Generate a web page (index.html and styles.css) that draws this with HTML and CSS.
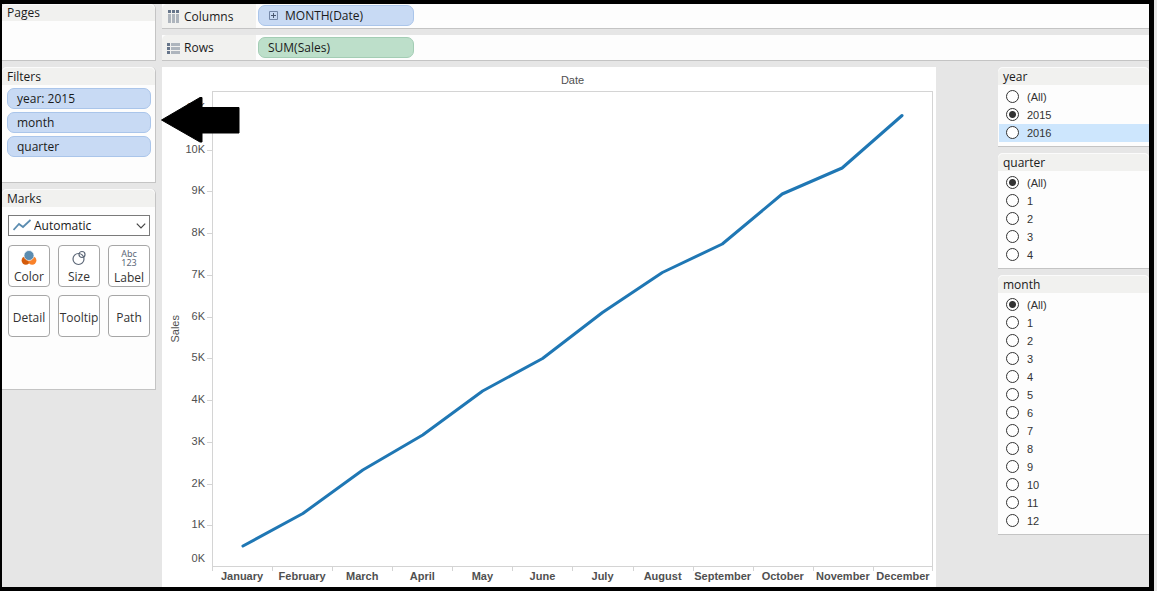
FILE: index.html
```html
<!DOCTYPE html>
<html lang="en">
<head>
<meta charset="utf-8">
<title>Sales by Month</title>
<link rel="stylesheet" href="styles.css">
</head>
<body>
<div class="frame">
  <aside class="sidebar">
    <section class="card card-pages">
      <h2 class="card-title">Pages</h2>
    </section>
    <section class="card card-filters">
      <h2 class="card-title">Filters</h2>
      <div class="pill-list">
        <button class="pill" type="button">year: 2015</button>
        <button class="pill" type="button">month</button>
        <button class="pill" type="button">quarter</button>
      </div>
    </section>
    <section class="card card-marks">
      <h2 class="card-title">Marks</h2>
      <div class="marks-body">
        <div class="mark-type">
          <svg class="mark-type-icon" width="18" height="12" viewBox="0 0 18 12" fill="none" stroke="#5b8cb0" stroke-width="1.800"><path d="M0.500 11 L6 5 L10 8 L17.500 1"/></svg>
          <select class="mark-select" aria-label="Mark type"><option>Automatic</option></select>
          <svg class="mark-type-arrow" width="10" height="6" viewBox="0 0 10 6" fill="none" stroke="#444" stroke-width="1.200"><path d="M0.800 0.700 L5 5 L9.200 0.700"/></svg>
        </div>
        <div class="mark-grid">
          <button class="mark-button" type="button">
            <svg width="16" height="16" viewBox="0 0 16 16"><circle cx="4.800" cy="10.500" r="4.200" fill="#d45b0b"/><circle cx="11.200" cy="10.500" r="4.200" fill="#f9812a"/><circle cx="8" cy="5.500" r="5" fill="#5b8cb0" stroke="#fff" stroke-width="0.700"/></svg>
            <span>Color</span>
          </button>
          <button class="mark-button" type="button">
            <svg width="16" height="16" viewBox="0 0 16 16" fill="none" stroke="#5d6878" stroke-width="1.200"><circle cx="7.500" cy="9" r="5.500"/><circle cx="11" cy="4.500" r="3"/></svg>
            <span>Size</span>
          </button>
          <button class="mark-button" type="button">
            <span class="label-glyph" aria-hidden="true"><span>Abc</span><span>123</span></span>
            <span>Label</span>
          </button>
          <button class="mark-button" type="button">Detail</button>
          <button class="mark-button" type="button">Tooltip</button>
          <button class="mark-button" type="button">Path</button>
        </div>
      </div>
    </section>
  </aside>

  <main class="main">
    <div class="shelf">
      <div class="shelf-label">
        <svg width="13" height="13" viewBox="0 0 13 13"><path fill="#66758a" d="M1 0h3v3H1zM5 0h3v3H5zM9 0h3v3H9z"/><path fill="#aeb5bd" d="M1 4h3v9H1zM5 4h3v9H5zM9 4h3v9H9z"/></svg>
        <span>Columns</span>
      </div>
      <button class="pill pill-wide" type="button">
        <svg class="expand" width="9" height="9" viewBox="0 0 9 9" fill="none" stroke="#7588a8"><path d="M0.500 0.500h8v8h-8z"/><path stroke="#4a5870" d="M2 4.500h5M4.500 2v5"/></svg>
        <span>MONTH(Date)</span>
      </button>
    </div>
    <div class="shelf">
      <div class="shelf-label">
        <svg width="13" height="13" viewBox="0 0 13 13"><path fill="#66758a" d="M0 1h3v3H0zM0 5h3v3H0zM0 9h3v3H0z"/><path fill="#aeb5bd" d="M4 1h9v3H4zM4 5h9v3H4zM4 9h9v3H4z"/></svg>
        <span>Rows</span>
      </div>
      <button class="pill pill-wide pill-green" type="button">SUM(Sales)</button>
    </div>

    <div class="workspace">
      <section class="chart">
        <h1 class="chart-title">Date</h1>
        <div class="axis-title"><span>Sales</span></div>
        <div class="y-axis">
          <div class="y-step"><span class="y-label">11K</span></div>
          <div class="y-step"><span class="y-label">10K</span></div>
          <div class="y-step"><span class="y-label">9K</span></div>
          <div class="y-step"><span class="y-label">8K</span></div>
          <div class="y-step"><span class="y-label">7K</span></div>
          <div class="y-step"><span class="y-label">6K</span></div>
          <div class="y-step"><span class="y-label">5K</span></div>
          <div class="y-step"><span class="y-label">4K</span></div>
          <div class="y-step"><span class="y-label">3K</span></div>
          <div class="y-step"><span class="y-label">2K</span></div>
          <div class="y-step"><span class="y-label">1K</span><span class="y-zero">0K</span></div>
        </div>
        <div class="plot">
          <svg class="plot-line" viewBox="0 0 720 474" preserveAspectRatio="none" role="img" aria-label="Sales by month"><polyline points="30,454 90,421.500 150,378 210,343 270,299 330,266.500 390,220.500 450,180.500 510,152 570,102 630,76 690,23.500" fill="none" stroke="#1f77b4" stroke-width="3" stroke-linecap="round" stroke-linejoin="round" vector-effect="non-scaling-stroke"/></svg>
        </div>
        <div class="x-axis">
          <span>January</span><span>February</span><span>March</span><span>April</span><span>May</span><span>June</span><span>July</span><span>August</span><span>September</span><span>October</span><span>November</span><span>December</span>
        </div>
        <svg class="callout" width="80" height="46" viewBox="0 0 80 46"><path d="M0.500 23 L39 0.500 H41 V10.500 H78 V36 H41 V45 H39 Z" fill="#000" stroke="#000" stroke-linejoin="round"/></svg>
      </section>

      <div class="filters">
        <fieldset class="card filter">
          <legend class="card-title">year</legend>
          <div class="options">
            <label class="option"><input type="radio" name="year">(All)</label>
            <label class="option"><input type="radio" name="year" checked>2015</label>
            <label class="option option-active"><input type="radio" name="year">2016</label>
          </div>
        </fieldset>
        <fieldset class="card filter">
          <legend class="card-title">quarter</legend>
          <div class="options">
            <label class="option"><input type="radio" name="quarter" checked>(All)</label>
            <label class="option"><input type="radio" name="quarter">1</label>
            <label class="option"><input type="radio" name="quarter">2</label>
            <label class="option"><input type="radio" name="quarter">3</label>
            <label class="option"><input type="radio" name="quarter">4</label>
          </div>
        </fieldset>
        <fieldset class="card filter">
          <legend class="card-title">month</legend>
          <div class="options">
            <label class="option"><input type="radio" name="month" checked>(All)</label>
            <label class="option"><input type="radio" name="month">1</label>
            <label class="option"><input type="radio" name="month">2</label>
            <label class="option"><input type="radio" name="month">3</label>
            <label class="option"><input type="radio" name="month">4</label>
            <label class="option"><input type="radio" name="month">5</label>
            <label class="option"><input type="radio" name="month">6</label>
            <label class="option"><input type="radio" name="month">7</label>
            <label class="option"><input type="radio" name="month">8</label>
            <label class="option"><input type="radio" name="month">9</label>
            <label class="option"><input type="radio" name="month">10</label>
            <label class="option"><input type="radio" name="month">11</label>
            <label class="option"><input type="radio" name="month">12</label>
          </div>
        </fieldset>
      </div>
    </div>
  </main>
</div>
</body>
</html>
```

FILE: styles.css
```css
* {
  box-sizing: border-box;
}

body {
  margin: 0;
  padding-right: 3px;
  background: #e7e7e7;
  color: #1a1a1a;
  font: 12px/18px "Open Sans", "Noto Sans", sans-serif;
}

button,
select {
  margin: 0;
  color: inherit;
  font: inherit;
}

.frame {
  display: flex;
  gap: 6px;
  min-height: 100vh;
  border: solid #000;
  border-width: 4px 5px 4px 2px;
  background: #e6e6e6;
}

/* Cards */
.sidebar {
  display: flex;
  flex: none;
  flex-direction: column;
  gap: 6px;
  width: 154px;
}

.card {
  border-right: 1px solid #c4c4c4;
  border-bottom: 1px solid #c4c4c4;
  border-radius: 5px 5px 0 0;
  background: #fdfdfd;
}

.card-title {
  margin: 0;
  padding: 2px 5px 0;
  border-radius: 5px 5px 0 0;
  background: #f1f1ef;
  box-shadow: inset 0 1px #fbfbfb;
  font-size: 12px;
  font-weight: 400;
  line-height: 16px;
}

.card-pages {
  min-height: 57px;
}

.card-pages .card-title {
  padding-top: 1px;
}

.card-filters {
  min-height: 116px;
}

.card-marks {
  min-height: 201px;
}

/* Pills */
.pill-list {
  display: grid;
  gap: 3px;
  padding: 3px 4px 0 5px;
}

.pill {
  display: flex;
  align-items: center;
  height: 21px;
  padding: 0 9px;
  border: 1px solid #aac5ea;
  border-radius: 7px;
  background: #c8daf4;
}

.pill-wide {
  gap: 7px;
  width: 156px;
  margin: 1px 2px;
}

.pill-green {
  margin-top: 2px;
  border-color: #a3cdb4;
  background: #bddfca;
}

.expand {
  margin-left: 1px;
}

/* Marks */
.marks-body {
  display: grid;
  gap: 9px;
  padding: 8px 5px 0 6px;
}

.mark-type {
  position: relative;
}

.mark-select {
  display: block;
  width: 100%;
  height: 21px;
  padding: 0 20px 0 25px;
  border: 1px solid #7a7a7a;
  border-radius: 0;
  background: #fff;
  appearance: none;
}

.mark-type-icon,
.mark-type-arrow {
  position: absolute;
  top: 4px;
  left: 5px;
  pointer-events: none;
}

.mark-type-arrow {
  top: 8px;
  right: 4px;
  left: auto;
}

.mark-grid {
  display: grid;
  grid-template-columns: repeat(3, 42px);
  gap: 8px;
  justify-content: space-between;
}

.mark-button {
  display: flex;
  flex-direction: column;
  gap: 2px;
  align-items: center;
  justify-content: center;
  height: 42px;
  padding: 3px 0 0;
  border: 1px solid #a6a6a6;
  border-radius: 4px;
  background: #fff;
  color: #333;
}

.label-glyph {
  display: grid;
  height: 18px;
  color: #5d6878;
  font: 9px/9px "Noto Sans", sans-serif;
}

/* Shelves */
.main {
  display: flex;
  flex: 1;
  flex-direction: column;
  gap: 6px;
  min-width: 0;
}

.shelf {
  display: flex;
  height: 25px;
  border-bottom: 1px solid #c4c4c4;
  background: #fdfdfd;
}

.shelf + .shelf {
  height: 26px;
}

.shelf-label {
  display: flex;
  gap: 4px;
  align-items: center;
  width: 94px;
  padding: 1px 0 0 5px;
  border-radius: 5px 0 0;
  background: #f1f1ef;
}

/* Chart */
.workspace {
  display: flex;
  flex: 1;
  gap: 62px;
}

.chart {
  position: relative;
  display: grid;
  flex: 1;
  grid-template-rows: 24px 1fr 20px;
  grid-template-columns: 22px 28px 1fr;
  padding-right: 3px;
  background: #fff;
  color: #505050;
  font: 11px/14px "Liberation Sans", Arial, sans-serif;
}

.chart-title {
  grid-column: 3;
  margin: 0;
  font-size: 11px;
  font-weight: 400;
  line-height: 26px;
  text-align: center;
}

.axis-title {
  display: flex;
  grid-row: 2;
  grid-column: 1;
  align-items: center;
  justify-content: center;
  padding-left: 4px;
}

.axis-title span {
  writing-mode: vertical-rl;
  transform: rotate(180deg);
}

.y-axis {
  display: flex;
  flex-direction: column;
  grid-row: 2;
  grid-column: 2;
  padding-top: 17px;
}

.y-step {
  display: flex;
  flex: 1;
  flex-direction: column;
  justify-content: space-between;
  background: linear-gradient(#d4d4d4, #d4d4d4) right top / 5px 1px no-repeat;
  text-align: right;
}

.y-label,
.y-zero {
  padding-right: 7px;
}

.y-label {
  margin-top: -8px;
}

.y-zero {
  padding-bottom: 2px;
}

.plot {
  display: flex;
  grid-row: 2;
  grid-column: 3;
  border: 1px solid #d4d4d4;
}

.plot-line {
  flex: 1;
  width: 0;
  height: 100%;
  min-height: 0;
}

.x-axis {
  display: grid;
  grid-row: 3;
  grid-column: 3;
  grid-template-columns: repeat(12, 1fr);
  background: linear-gradient(#d4d4d4, #d4d4d4) right top / 1px 4px no-repeat;
  font-weight: 700;
  line-height: 18px;
}

.x-axis span {
  display: flex;
  justify-content: center;
  min-width: 0;
  background: linear-gradient(#d4d4d4, #d4d4d4) left top / 1px 4px no-repeat;
}

.callout {
  position: absolute;
  top: 30px;
  left: -1px;
}

/* Filter controls */
.filters {
  display: flex;
  flex: none;
  flex-direction: column;
  gap: 6px;
  width: 151px;
}

.filter {
  min-width: 0;
  margin: 0;
  padding: 0;
  border-width: 0 0 1px;
  border-style: solid;
}

.filter .card-title {
  float: left;
  width: 100%;
}

.options {
  clear: both;
  padding: 3px 0 4px 1px;
}

.option {
  display: flex;
  gap: 8px;
  align-items: center;
  padding-left: 7px;
  color: #333;
  font: 11px/18px "Liberation Sans", Arial, sans-serif;
}

.option-active {
  background: #cde6fd;
}

.option input {
  width: 13px;
  height: 13px;
  margin: 0 0 1px;
  border: 1px solid #333;
  border-radius: 50%;
  background: #fff;
  appearance: none;
}

.option input:checked {
  background: radial-gradient(circle, #333 3px, #fff 4px);
}
```
